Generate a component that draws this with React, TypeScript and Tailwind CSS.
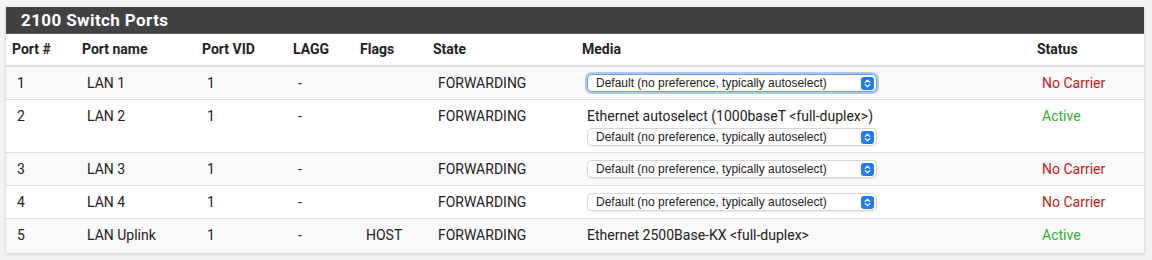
import React from "react";

type Port = {
  num: string;
  name: string;
  vid: string;
  lagg: string;
  flags: string;
  state: string;
  media?: string;
  select: boolean;
  focused?: boolean;
  active: boolean;
};

const ports: Port[] = [
  { num: "1", name: "LAN 1", vid: "1", lagg: "-", flags: "", state: "FORWARDING", select: true, focused: true, active: false },
  { num: "2", name: "LAN 2", vid: "1", lagg: "-", flags: "", state: "FORWARDING", media: "Ethernet autoselect (1000baseT <full-duplex>)", select: true, active: true },
  { num: "3", name: "LAN 3", vid: "1", lagg: "-", flags: "", state: "FORWARDING", select: true, active: false },
  { num: "4", name: "LAN 4", vid: "1", lagg: "-", flags: "", state: "FORWARDING", select: true, active: false },
  { num: "5", name: "LAN Uplink", vid: "1", lagg: "-", flags: "HOST", state: "FORWARDING", media: "Ethernet 2500Base-KX <full-duplex>", select: false, active: true },
];

const headers = ["Port #", "Port name", "Port VID", "LAGG", "Flags", "State", "Media", "Status"];
const widths = ["w-[70px]", "w-[120px]", "w-[91px]", "w-[67px]", "w-[73px]", "w-[149px]", "w-[455px]", "w-[113px]"];

function MediaSelect({ focused }: { focused?: boolean }) {
  return (
    <div
      className={
        "flex h-[18px] w-[290px] items-center justify-between rounded-[5px] bg-white pl-[8px] pr-[2px] text-[12px] text-[#222] " +
        (focused
          ? "border border-[#6f9cf0] shadow-[0_0_0_2px_rgba(111,156,240,0.55)]"
          : "border border-[#d6d6d6] shadow-[0_1px_1px_rgba(0,0,0,0.08)]")
      }
      style={{ fontFamily: '"Liberation Sans", Arial, sans-serif' }}
    >
      <span>Default (no preference, typically autoselect)</span>
      <span className="flex h-[13px] w-[13px] items-center justify-center rounded-[3px] bg-[#1f7bf2]">
        <svg width="7" height="9" viewBox="0 0 7 9" fill="none" stroke="white" strokeWidth="1.3" strokeLinecap="round" strokeLinejoin="round">
          <path d="M1.2 3.4 L3.5 1.2 L5.8 3.4" />
          <path d="M1.2 5.6 L3.5 7.8 L5.8 5.6" />
        </svg>
      </span>
    </div>
  );
}

export default function App() {
  return (
    <div
      className="min-h-[260px] w-[1152px] bg-[#f3f3f3] pl-[6px] pr-[8px] pt-[7px]"
      style={{ fontFamily: 'Roboto, "Liberation Sans", sans-serif' }}
    >
      <div className="bg-white shadow-[0_1px_3px_rgba(0,0,0,0.18)]">
        {/* Panel heading */}
        <div className="flex h-[27px] items-center border-b border-[#5a5a5a] bg-[#424242] pl-[15px] pt-[1px]">
          <h2 className="text-[17px] font-bold tracking-[0.4px] text-white">2100 Switch Ports</h2>
        </div>

        <table className="w-full table-fixed border-collapse text-[14px] text-[#222]">
          <thead>
            <tr className="h-[32px] border-b-2 border-[#dddddd] bg-white">
              {headers.map((h, i) => (
                <th key={h} className={widths[i] + " pl-[6px] text-left align-middle font-bold"}>
                  {h}
                </th>
              ))}
            </tr>
          </thead>
          <tbody>
            {ports.map((p, idx) => (
              <tr
                key={p.num}
                className={(idx % 2 === 0 ? "bg-[#f9f9f9]" : "bg-white") + " border-b border-[#dddddd] last:border-b-0"}
              >
                <td className="py-[7px] pl-[11px] align-top leading-[18px]">{p.num}</td>
                <td className="py-[7px] pl-[11px] align-top leading-[18px]">{p.name}</td>
                <td className="py-[7px] pl-[11px] align-top leading-[18px]">{p.vid}</td>
                <td className="py-[7px] pl-[11px] align-top leading-[18px]">{p.lagg}</td>
                <td className="py-[7px] pl-[12px] align-top leading-[18px]">{p.flags}</td>
                <td className="py-[7px] pl-[11px] align-top leading-[18px]">{p.state}</td>
                <td className="pb-[6px] pt-[7px] pl-[11px] align-top leading-[18px]">
                  {p.media && <div className="mb-[3px]">{p.media}</div>}
                  {p.select && <MediaSelect focused={p.focused} />}
                </td>
                <td
                  className={
                    "py-[7px] pl-[11px] align-top leading-[18px] " + (p.active ? "text-[#2fb02f]" : "text-[#c41a1a]")
                  }
                >
                  {p.active ? "Active" : "No Carrier"}
                </td>
              </tr>
            ))}
          </tbody>
        </table>
      </div>
    </div>
  );
}
